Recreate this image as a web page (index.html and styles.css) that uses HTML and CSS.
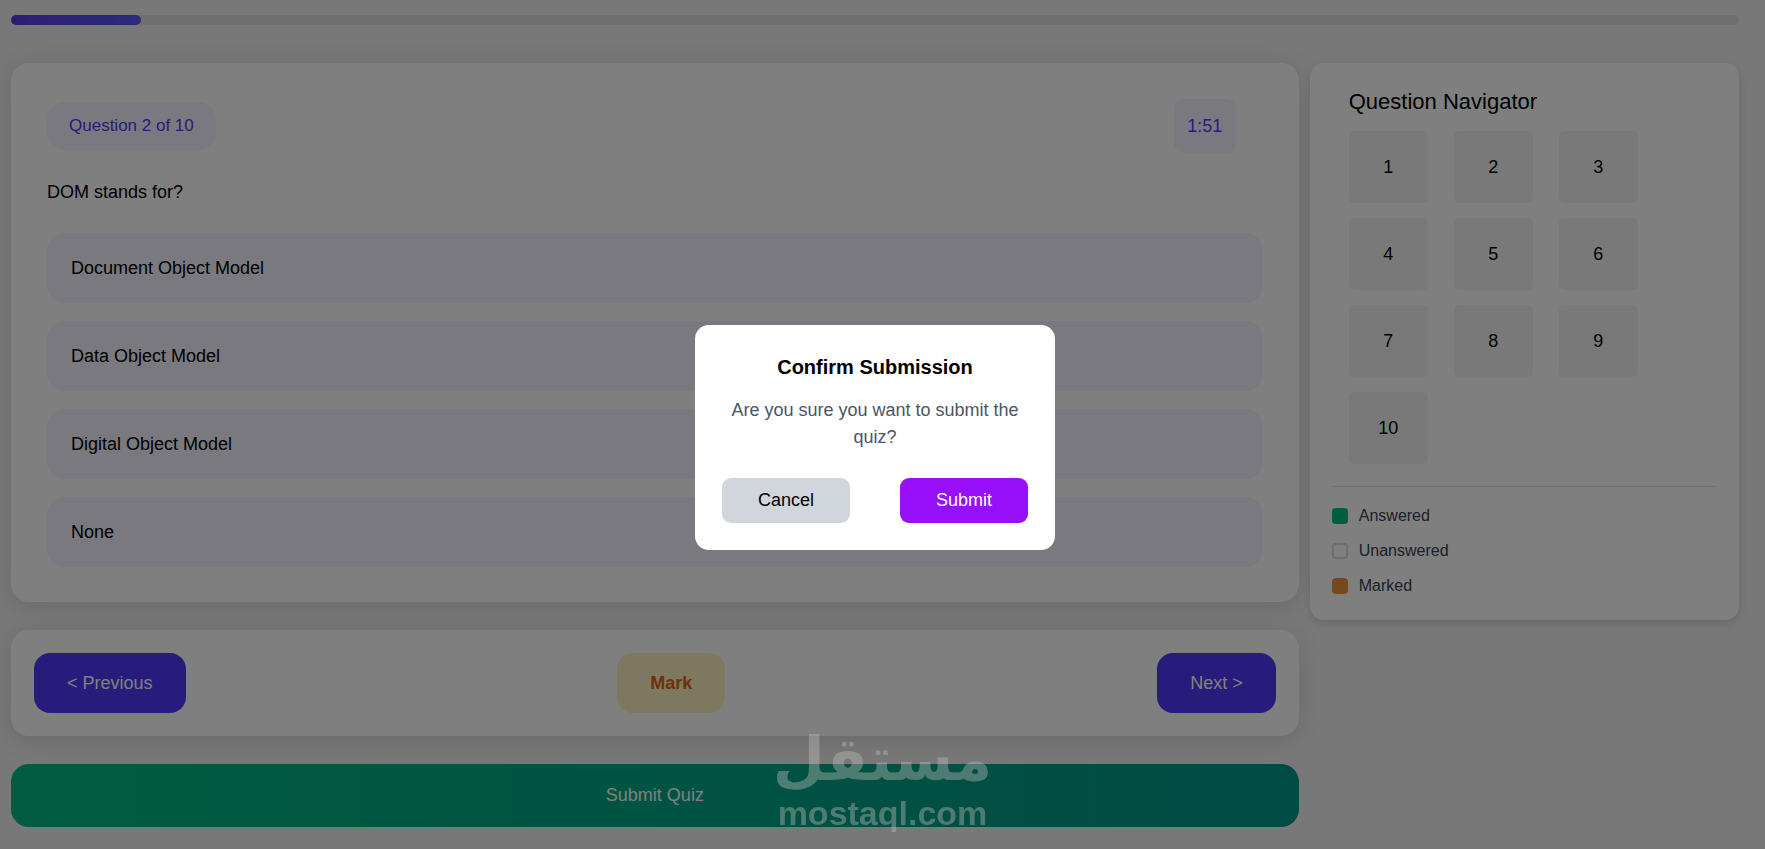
FILE: index.html
```html
<!DOCTYPE html>
<html lang="en">
  <head>
    <meta charset="UTF-8">
    <meta name="viewport" content="width=device-width, initial-scale=1">
    <title>Quiz</title>
    <link rel="stylesheet" href="styles.css">
  </head>
  <body>
    <div class="progress">
      <div class="progress-fill" style="width: 7.5%"></div>
    </div>

    <div class="layout">
      <main class="quiz">
        <section class="card question-card">
          <div class="question-header">
            <span class="badge">Question 2 of 10</span>
            <span class="timer">1:51</span>
          </div>
          <p class="question-text">DOM stands for?</p>
          <div class="options">
            <button class="option" type="button">Document Object Model</button>
            <button class="option" type="button">Data Object Model</button>
            <button class="option" type="button">Digital Object Model</button>
            <button class="option" type="button">None</button>
          </div>
        </section>

        <section class="card actions">
          <button class="btn btn-primary" type="button">&lt; Previous</button>
          <button class="btn btn-mark" type="button">Mark</button>
          <button class="btn btn-primary" type="button">Next &gt;</button>
        </section>

        <button class="submit-quiz" type="button">Submit Quiz</button>
      </main>

      <aside class="navigator">
        <div class="navigator-body">
          <h2 class="navigator-title">Question Navigator</h2>
          <div class="navigator-grid">
            <button class="nav-item" type="button">1</button>
            <button class="nav-item" type="button">2</button>
            <button class="nav-item" type="button">3</button>
            <button class="nav-item" type="button">4</button>
            <button class="nav-item" type="button">5</button>
            <button class="nav-item" type="button">6</button>
            <button class="nav-item" type="button">7</button>
            <button class="nav-item" type="button">8</button>
            <button class="nav-item" type="button">9</button>
            <button class="nav-item" type="button">10</button>
          </div>
        </div>
        <ul class="legend">
          <li><span class="swatch answered"></span>Answered</li>
          <li><span class="swatch unanswered"></span>Unanswered</li>
          <li><span class="swatch marked"></span>Marked</li>
        </ul>
      </aside>
    </div>

    <div class="overlay">
      <div class="modal" role="dialog" aria-modal="true" aria-labelledby="modalTitle">
        <h2 class="modal-title" id="modalTitle">Confirm Submission</h2>
        <p class="modal-text">Are you sure you want to submit the quiz?</p>
        <div class="modal-actions">
          <button class="modal-btn cancel" type="button">Cancel</button>
          <button class="modal-btn confirm" type="button">Submit</button>
        </div>
      </div>
    </div>

    <div class="watermark">
      <span class="watermark-ar" lang="ar" dir="rtl">مستقل</span>
      <span class="watermark-en">mostaql.com</span>
    </div>
  </body>
</html>
```
FILE: styles.css
```css
* {
  box-sizing: border-box;
}

body {
  margin: 0;
  padding: 15px 26px 0 11px;
  background: #f0f0f0;
  color: #000;
  font-family: "Liberation Sans", Arial, sans-serif;
  font-size: 18px;
  line-height: 27px;
}

h2,
p,
ul {
  margin: 0;
  padding: 0;
}

button {
  border: none;
  color: inherit;
  font: inherit;
  cursor: pointer;
}

.progress {
  height: 10px;
  margin-bottom: 38px;
  border-radius: 5px;
  background: #dedede;
}

.progress-fill {
  height: 100%;
  border-radius: 5px;
  background: linear-gradient(90deg, #5f38ea, #5658f2);
}

.layout {
  display: grid;
  grid-template-columns: 3fr 1fr;
  gap: 11px;
  align-items: start;
}

.quiz {
  display: flex;
  flex-direction: column;
  gap: 28px;
}

.card {
  border-radius: 18px;
  background: #fff;
  box-shadow: 0 4px 24px rgba(0, 0, 0, 0.12);
}

.question-card {
  padding: 36px 36px 35px;
}

.question-header {
  display: flex;
  justify-content: space-between;
  align-items: center;
  padding-right: 27px;
}

.badge {
  padding: 10px 22px 11px;
  border-radius: 18px;
  background: #f5f3ff;
  color: #4f39f6;
  font-size: 17px;
}

.timer {
  min-width: 62px;
  padding: 14px 13px 13px;
  border-radius: 9px;
  background: #f5f3ff;
  color: #4f39f6;
  text-align: center;
}

.question-text {
  margin: 26px 0 27px;
}

.options {
  display: grid;
  gap: 18px;
}

.option {
  height: 70px;
  padding: 0 24px;
  border-radius: 18px;
  background: #f5f3ff;
  text-align: left;
}

.actions {
  display: flex;
  justify-content: space-between;
  padding: 23px;
}

.btn {
  height: 60px;
  padding: 0 33px;
  border-radius: 16px;
}

.btn-primary {
  background: #4f39f6;
  color: #fff;
}

.btn-mark {
  background: #fef0c0;
  color: #d5660f;
  font-weight: 700;
}

.submit-quiz {
  height: 63px;
  border-radius: 18px;
  background: linear-gradient(90deg, #00b980, #009689);
  color: #fff;
}

.navigator {
  padding: 22px;
  border-radius: 14px;
  background: #fff;
  box-shadow: 0 4px 8px rgba(0, 0, 0, 0.12);
}

.navigator-body {
  padding: 0 17px 22px;
}

.navigator-title {
  margin-bottom: 12px;
  font-size: 22px;
  font-weight: 400;
  line-height: 34px;
}

.navigator-grid {
  display: grid;
  grid-template-columns: repeat(3, 79px);
  gap: 15px 26px;
}

.nav-item {
  height: 72px;
  padding: 0;
  border-radius: 5px;
  background: #f3f3f3;
}

.legend {
  display: grid;
  gap: 11px;
  padding-top: 17px;
  border-top: 1px solid #e5e5e5;
  color: #364153;
  font-size: 16px;
  line-height: 24px;
  list-style: none;
}

.legend li {
  display: flex;
  align-items: center;
  gap: 11px;
}

.swatch {
  width: 16px;
  height: 16px;
  border-radius: 4px;
}

.answered {
  background: #00bc7d;
}

.unanswered {
  border: 2px solid #d8dade;
}

.marked {
  background: #f0903a;
}

.overlay {
  position: fixed;
  inset: 0;
  display: flex;
  justify-content: center;
  align-items: center;
  padding: 26px 15px 0 0;
  background: rgba(0, 0, 0, 0.5);
  z-index: 10;
}

.modal {
  width: 360px;
  padding: 27px;
  border-radius: 14px;
  background: #fff;
  text-align: center;
}

.modal-title {
  margin-bottom: 15px;
  font-size: 20px;
  line-height: 30px;
}

.modal-text {
  margin-bottom: 27px;
  color: #4a5565;
}

.modal-actions {
  display: flex;
  justify-content: space-between;
}

.modal-btn {
  width: 128px;
  height: 45px;
  border-radius: 9px;
}

.cancel {
  background: #d1d5dc;
}

.confirm {
  background: #9810fa;
  color: #fff;
}

.watermark {
  position: fixed;
  right: 0;
  bottom: 16px;
  left: 0;
  display: flex;
  flex-direction: column;
  align-items: center;
  color: #c0bebc;
  font-weight: 700;
  line-height: normal;
  opacity: 0.4;
  pointer-events: none;
  z-index: 20;
}

.watermark-ar {
  font-family: "DejaVu Sans", sans-serif;
  font-size: 60px;
}

.watermark-en {
  font-size: 34px;
}
```
